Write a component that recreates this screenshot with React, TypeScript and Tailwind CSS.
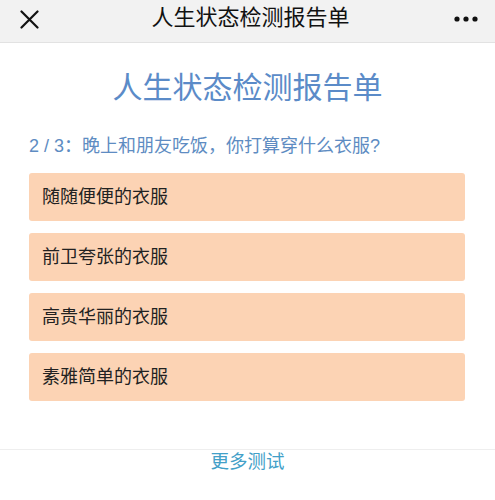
import React from "react";

const options = ["随随便便的衣服", "前卫夸张的衣服", "高贵华丽的衣服", "素雅简单的衣服"];

export default function App() {
  return (
    <div
      className="w-[495px] h-[500px] bg-white overflow-hidden flex flex-col"
      style={{ fontFamily: '"Liberation Sans", "Noto Sans CJK SC", sans-serif' }}
    >
      <div className="h-[43px] shrink-0 bg-[#f2f2f2] border-b border-[#e2e2e2] flex items-center justify-between pl-[20px] pr-[17px]">
        <svg width="19" height="19" viewBox="0 0 19 19" className="mt-[-4px]">
          <path d="M1.5 1.5 L17.5 17.5 M17.5 1.5 L1.5 17.5" stroke="#111" strokeWidth="2.2" strokeLinecap="round" />
        </svg>
        <div className="text-[22px] leading-[30px] text-[#111] mt-[-7px] ml-[8px]">人生状态检测报告单</div>
        <svg width="24" height="6" viewBox="0 0 24 6" className="mt-[-5px]">
          <circle cx="3" cy="3" r="2.6" fill="#111" />
          <circle cx="12" cy="3" r="2.6" fill="#111" />
          <circle cx="21" cy="3" r="2.6" fill="#111" />
        </svg>
      </div>
      <div className="flex flex-col">
        <div className="mt-[27px] h-[36px] leading-[36px] text-center text-[30px] text-[#5b8bc8]">人生状态检测报告单</div>
        <div className="mt-[28px] ml-[29px] h-[24px] leading-[24px] text-[18px] text-[#5e8cc2]">2 / 3：晚上和朋友吃饭，你打算穿什么衣服?</div>
        <div className="mt-[15px] ml-[29px] w-[436px] flex flex-col gap-[12px]">
          {options.map((o) => (
            <div key={o} className="h-[48px] rounded-[3px] bg-[#fcd3b4] flex items-center pl-[13px] text-[18px] text-[#222]">
              {o}
            </div>
          ))}
        </div>
      </div>
      <div className="mt-[48px] border-t border-[#eeeeee] flex justify-center">
        <div className="mt-[-1px] h-[26px] leading-[26px] text-[18.5px] text-[#42a0c8]">更多测试</div>
      </div>
    </div>
  );
}
